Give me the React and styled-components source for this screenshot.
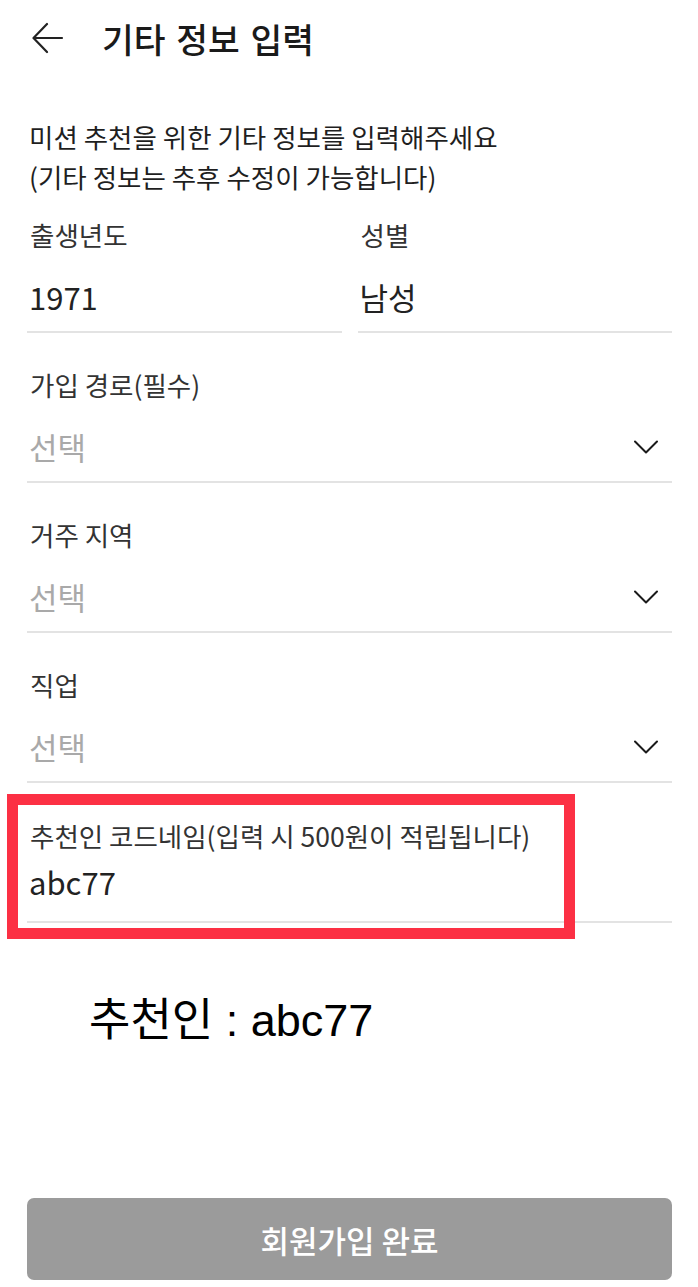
import React from "react";
import styled, { createGlobalStyle } from "styled-components";

const GlobalStyle = createGlobalStyle`
  html, body {
    margin: 0;
    padding: 0;
    background: #ffffff;
  }
  body {
    font-family: "Noto Sans CJK KR", "Noto Sans", sans-serif;
    color: #222222;
  }
  * { box-sizing: border-box; }
`;

const Page = styled.div`
  min-height: 100vh;
  display: flex;
  flex-direction: column;
  padding: 0 26px 7px 27px;
`;

const Header = styled.header`
  height: 76px;
  display: flex;
  align-items: center;
  gap: 38px;
  padding-left: 5px;
`;

const BackButton = styled.button`
  border: 0;
  background: none;
  padding: 0;
  width: 32px;
  height: 32px;
  display: flex;
  align-items: center;
  justify-content: center;
  color: #222;
  cursor: pointer;
`;

const Title = styled.h1`
  margin: 0;
  font-size: 34.5px;
  font-weight: 500;
  color: #1a1a1a;
  word-spacing: 3px;
  line-height: 40px;
`;

const Intro = styled.p`
  margin: 41px 0 0;
  font-size: 26.5px;
  line-height: 40px;
  color: #1f1f1f;
  padding-left: 2px;
`;

const Row = styled.div`
  display: grid;
  grid-template-columns: 1fr 1fr;
  gap: 16px;
  margin-top: ${(p) => p.$top}px;
`;

const Field = styled.div`
  position: relative;
  margin-top: ${(p) => p.$top || 0}px;
  border-bottom: 2px solid #e3e3e3;
  padding-bottom: ${(p) => p.$pb || 10}px;
`;

const Label = styled.div`
  font-size: 26.5px;
  line-height: 36px;
  color: #333333;
  padding-left: 3px;
`;

const ValueRow = styled.div`
  display: flex;
  align-items: center;
  justify-content: space-between;
  margin-top: ${(p) => p.$gap}px;
  height: ${(p) => p.$h}px;
  padding: 0 14px 0 2px;
`;

const Value = styled.span`
  font-size: 31px;
  line-height: ${(p) => p.$h}px;
  color: ${(p) => (p.$placeholder ? "#a9a9a9" : "#222222")};
`;

const Highlight = styled.div`
  position: absolute;
  left: -20px;
  top: -24px;
  width: 568px;
  height: 145px;
  border: 11px solid #fc3044;
  pointer-events: none;
`;

const Annotation = styled.div`
  margin-top: 74px;
  padding-left: 62px;
  font-family: "Liberation Sans", "Noto Sans CJK KR", sans-serif;
  font-size: 45px;
  line-height: 48px;
  color: #000;
`;

const SubmitButton = styled.button`
  margin-top: auto;
  height: 82px;
  width: 100%;
  border: 0;
  border-radius: 7px;
  background: #9b9b9b;
  color: #ffffff;
  font-family: "Noto Sans CJK KR", sans-serif;
  font-size: 31px;
  font-weight: 500;
`;

const BackArrow = () => (
  <svg width="32" height="32" viewBox="0 0 32 32" fill="none">
    <path
      d="M30 16H2M15 2L1.5 16L15 30"
      stroke="#222"
      strokeWidth="2.2"
      strokeLinecap="round"
      strokeLinejoin="round"
    />
  </svg>
);

const Chevron = () => (
  <svg width="24" height="14" viewBox="0 0 24 14" fill="none">
    <path
      d="M1 1.5L12 12.5L23 1.5"
      stroke="#1a1a1a"
      strokeWidth="2"
      strokeLinecap="round"
      strokeLinejoin="round"
    />
  </svg>
);

const SelectField = ({ label }) => (
  <Field $top={34}>
    <Label>{label}</Label>
    <ValueRow $gap={20} $h={48}>
      <Value $placeholder $h={48}>선택</Value>
      <Chevron />
    </ValueRow>
  </Field>
);

export default function App() {
  return (
    <>
      <GlobalStyle />
      <Page>
        <Header>
          <BackButton aria-label="뒤로">
            <BackArrow />
          </BackButton>
          <Title>기타 정보 입력</Title>
        </Header>

        <Intro>
          미션 추천을 위한 기타 정보를 입력해주세요
          <br />
          (기타 정보는 추후 수정이 가능합니다)
        </Intro>

        <Row $top={20}>
          <Field>
            <Label>출생년도</Label>
            <ValueRow $gap={20} $h={48}>
              <Value $h={48}>1971</Value>
            </ValueRow>
          </Field>
          <Field>
            <Label>성별</Label>
            <ValueRow $gap={20} $h={48}>
              <Value $h={48}>남성</Value>
            </ValueRow>
          </Field>
        </Row>

        <SelectField label="가입 경로(필수)" />
        <SelectField label="거주 지역" />
        <SelectField label="직업" />

        <Field $top={35} $pb={19}>
          <Label>추천인 코드네임(입력 시 500원이 적립됩니다)</Label>
          <ValueRow $gap={8} $h={40}>
            <Value $h={40}>abc77</Value>
          </ValueRow>
          <Highlight />
        </Field>

        <Annotation>추천인 : abc77</Annotation>

        <SubmitButton>회원가입 완료</SubmitButton>
      </Page>
    </>
  );
}
